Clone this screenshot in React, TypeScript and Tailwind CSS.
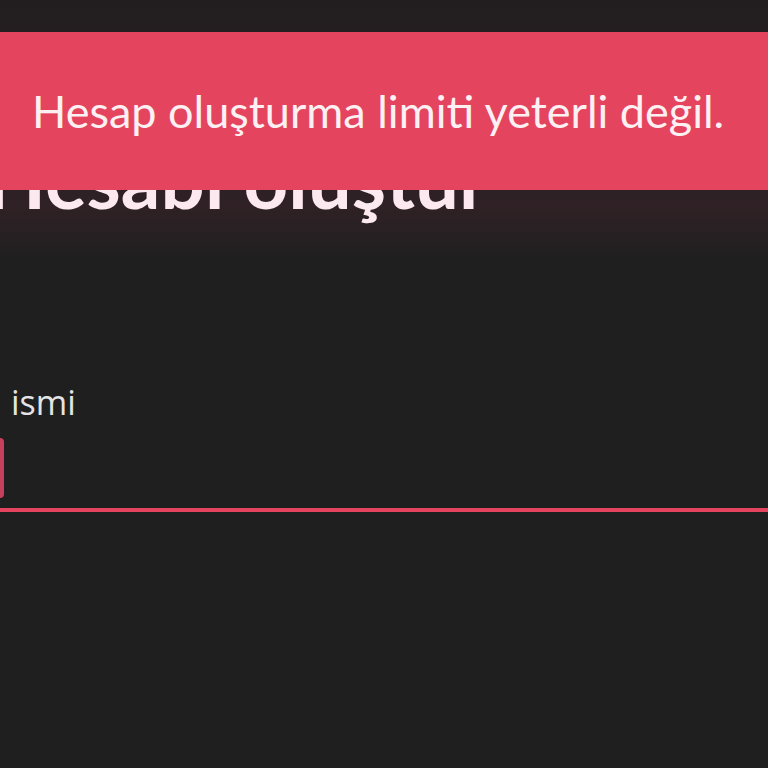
export default function App() {
  return (
    <div className="relative w-[768px] h-[768px] overflow-hidden bg-[#1f1f1f] font-['Lato','Open_Sans',sans-serif]">
      <header className="h-[260px] bg-gradient-to-b from-[#221e1f] via-[#2f2125] via-80% to-[#1f1f1f] pt-[139px]">
        <h1 className="-ml-[14px] text-[78px] leading-[80px] font-bold text-[#fce9ef] whitespace-nowrap">
          Hesabı oluştur
        </h1>
      </header>

      <section className="pt-[120px]">
        <label className="block pl-[11px] text-[34px] leading-[44px] text-[#e4e4e4] font-['Open_Sans',sans-serif]">
          ismi
        </label>
        <div className="mt-[14px] h-[60px] w-[4px] rounded-r bg-[#c73f5c]" />
        <div className="mt-[10px] h-[4px] w-full bg-[#e5445f]" />
      </section>

      <div className="absolute left-0 right-0 top-[32px] h-[158px] bg-[#e5445f] flex items-center px-8">
        <p className="text-[45px] leading-[52px] text-[#fdf0f3] font-normal whitespace-nowrap">
          Hesap oluşturma limiti yeterli değil.
        </p>
      </div>
    </div>
  );
}
